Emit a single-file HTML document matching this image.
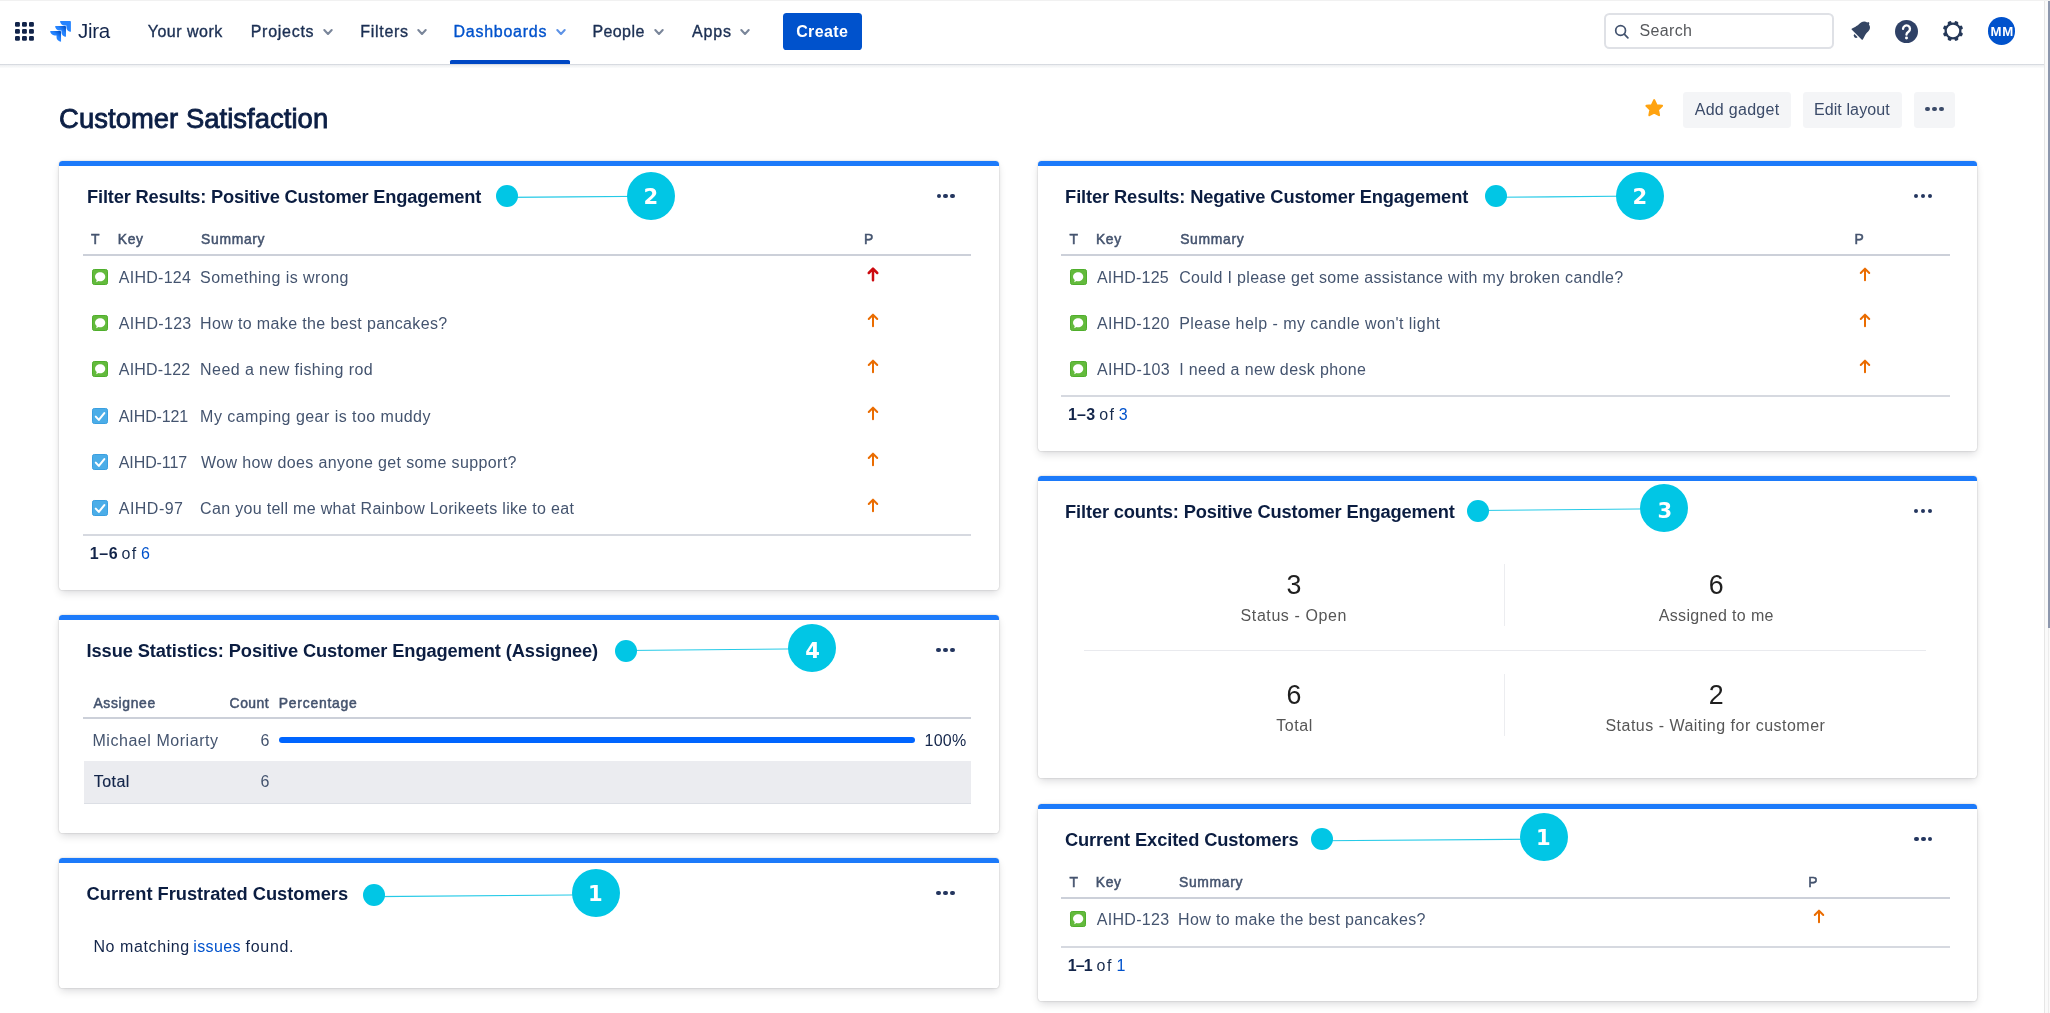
<!DOCTYPE html><html lang="en"><head><meta charset="utf-8"><title>Customer Satisfaction - Jira</title><style>
html,body{margin:0;padding:0}
body{will-change:transform;width:2050px;height:1013px;overflow:hidden;background:#fff;font-family:"Liberation Sans",Arial,sans-serif;position:relative;color:#172b4d}
.t{position:absolute;white-space:pre;line-height:1;margin:0;padding:0;font-weight:400;text-decoration:none}
.a{position:absolute}
svg{position:absolute;overflow:visible}
.nav{position:absolute;left:0;top:0;width:2043.5px;height:64px;background:#fff}
.nav:after{content:"";position:absolute;left:0;right:0;top:100%;height:4.6px;background:linear-gradient(180deg,rgba(9,30,66,.16) 0,rgba(9,30,66,.16) 1px,rgba(9,30,66,.07) 1px,rgba(9,30,66,0) 4.6px)}
.topline{position:absolute;left:0;top:0;width:2050px;height:1px;background:#f1f1f1}
.btn{position:absolute;background:#f4f5f7;border-radius:3.4px}
.create{position:absolute;background:#0052cc;border-radius:3.6px}
.search{position:absolute;box-sizing:border-box;border:2.2px solid #dfe1e6;border-radius:5.5px;background:#fff}
.avatar{position:absolute;border-radius:50%;background:#0052cc}
.gadget{position:absolute;background:#fff;border-radius:3.6px;box-shadow:0 4px 8px -1px rgba(10,10,20,.14),0 0 1.6px rgba(10,10,20,.28),0 0 7px rgba(10,10,20,.04)}
.gadget:before{content:"";position:absolute;left:0;right:0;top:0;height:5px;background:#1c7afa;border-radius:3.6px 3.6px 0 0}
.rule{position:absolute;height:2px;background:#cfd3db}
.dot{position:absolute;border-radius:50%;background:#01c6e5}
.more i{position:absolute;width:4.3px;height:4.3px;border-radius:50%;background:#24365f;top:0}
.more{position:absolute;height:4.3px}
.ico{position:absolute;width:16.3px;height:16px;border-radius:2.3px;box-sizing:border-box}
.ico.g{background:#63ba3c;border:1px solid #4fae2c}
.ico.b{background:#4bade8;border:1px solid #3a9fe0}
.vsep{position:absolute;width:1px;background:#ecedf0}
.hsep{position:absolute;height:1.2px;background:#e9eaee}
.track{position:absolute;left:2043.5px;top:0;width:6.5px;height:1013px;background:#fafafa;border-left:1.4px solid #e6e6e6;box-sizing:border-box}
.thumb{position:absolute;left:2048px;top:0;width:2px;height:627.5px;background:#8d97ad}
.track2{position:absolute;left:2048px;top:0;width:1px;height:1013px;background:#ececec}
</style></head><body>
<header class="nav">
<svg style="left:15.2px;top:21.9px" width="19" height="19" fill="#12244a"><rect x="0.0" y="0.0" width="4.9" height="4.7" rx="1.3"/><rect x="7.0" y="0.0" width="4.9" height="4.7" rx="1.3"/><rect x="14.0" y="0.0" width="4.9" height="4.7" rx="1.3"/><rect x="0.0" y="7.0" width="4.9" height="4.7" rx="1.3"/><rect x="7.0" y="7.0" width="4.9" height="4.7" rx="1.3"/><rect x="14.0" y="7.0" width="4.9" height="4.7" rx="1.3"/><rect x="0.0" y="14.0" width="4.9" height="4.7" rx="1.3"/><rect x="7.0" y="14.0" width="4.9" height="4.7" rx="1.3"/><rect x="14.0" y="14.0" width="4.9" height="4.7" rx="1.3"/></svg>
<svg style="left:50px;top:20.9px" width="21.1" height="20.7" viewBox="0 0 24 24"><defs><linearGradient id="jg1" x1="98%" y1="0%" x2="58%" y2="41%"><stop offset="18%" stop-color="#0052cc"/><stop offset="100%" stop-color="#2684ff"/></linearGradient></defs><path fill="#2684ff" d="M23.013 0H11.455a5.215 5.215 0 0 0 5.215 5.215h2.129v2.057A5.215 5.215 0 0 0 24 12.483V1.005A1.001 1.001 0 0 0 23.013 0z"/><path fill="url(#jg1)" d="M17.294 5.757H5.736a5.215 5.215 0 0 0 5.215 5.214h2.129v2.058a5.218 5.218 0 0 0 5.215 5.214V6.758a1.001 1.001 0 0 0-1.001-1.001z"/><path fill="url(#jg1)" d="M11.571 11.513H0a5.218 5.218 0 0 0 5.232 5.215h2.13v2.057A5.215 5.215 0 0 0 12.575 24V12.518a1.005 1.005 0 0 0-1.004-1.005z"/></svg>
<span class="t logo" style="left:77.90px;top:21.00px;font-size:20.5px;letter-spacing:-0.233px;color:#11244a;">Jira</span>
<nav>
<a class="t" style="left:147.70px;top:24.00px;font-size:16px;letter-spacing:0.513px;color:#1b2f53;-webkit-text-stroke:0.35px currentColor;">Your work</a>
<a class="t" style="left:250.70px;top:24.00px;font-size:16px;letter-spacing:0.729px;color:#1b2f53;-webkit-text-stroke:0.35px currentColor;">Projects</a>
<svg class="chev" style="left:322.35px;top:27.30px" width="12" height="10" viewBox="-6 -5 12 10"><polyline points="-3.7,-1.9 0,1.9 3.7,-1.9" fill="none" stroke="#7a869a" stroke-width="2.1" stroke-linecap="round" stroke-linejoin="round"/></svg>
<a class="t" style="left:360.20px;top:24.00px;font-size:16px;letter-spacing:0.717px;color:#1b2f53;-webkit-text-stroke:0.35px currentColor;">Filters</a>
<svg class="chev" style="left:415.90px;top:27.30px" width="12" height="10" viewBox="-6 -5 12 10"><polyline points="-3.7,-1.9 0,1.9 3.7,-1.9" fill="none" stroke="#7a869a" stroke-width="2.1" stroke-linecap="round" stroke-linejoin="round"/></svg>
<a class="t" style="left:453.50px;top:24.00px;font-size:16px;letter-spacing:0.744px;color:#0052cc;-webkit-text-stroke:0.35px currentColor;">Dashboards</a>
<svg class="chev" style="left:555.00px;top:27.30px" width="12" height="10" viewBox="-6 -5 12 10"><polyline points="-3.7,-1.9 0,1.9 3.7,-1.9" fill="none" stroke="#5e93e6" stroke-width="2.1" stroke-linecap="round" stroke-linejoin="round"/></svg>
<a class="t" style="left:592.40px;top:24.00px;font-size:16px;letter-spacing:0.420px;color:#1b2f53;-webkit-text-stroke:0.35px currentColor;">People</a>
<svg class="chev" style="left:653.45px;top:27.30px" width="12" height="10" viewBox="-6 -5 12 10"><polyline points="-3.7,-1.9 0,1.9 3.7,-1.9" fill="none" stroke="#7a869a" stroke-width="2.1" stroke-linecap="round" stroke-linejoin="round"/></svg>
<a class="t" style="left:692.00px;top:24.00px;font-size:16px;letter-spacing:0.833px;color:#1b2f53;-webkit-text-stroke:0.35px currentColor;">Apps</a>
<svg class="chev" style="left:739.30px;top:27.30px" width="12" height="10" viewBox="-6 -5 12 10"><polyline points="-3.7,-1.9 0,1.9 3.7,-1.9" fill="none" stroke="#7a869a" stroke-width="2.1" stroke-linecap="round" stroke-linejoin="round"/></svg>
<div class="a" style="left:449.6px;top:60px;width:120.4px;height:4px;background:#0048c4;border-radius:1.6px 1.6px 0 0"></div>
</nav>
<div class="create" style="left:783.2px;top:12.8px;width:78.8px;height:37px"></div>
<b class="t" style="left:796.20px;top:24.00px;font-size:16px;letter-spacing:0.360px;font-weight:700;color:#fff;">Create</b>
<div class="search" style="left:1603.8px;top:13.1px;width:230.2px;height:36.1px"></div>
<svg style="left:1613px;top:22.5px" width="18" height="18" viewBox="0 0 18 18"><circle cx="7.6" cy="7.5" r="4.9" fill="none" stroke="#42526e" stroke-width="1.7"/><line x1="11.3" y1="11.2" x2="14.9" y2="14.9" stroke="#42526e" stroke-width="1.7" stroke-linecap="round"/></svg>
<span class="t" style="left:1639.60px;top:23.00px;font-size:16px;letter-spacing:0.340px;color:#56585c;">Search</span>
<svg style="left:1846.6px;top:17.4px" width="27.43" height="27.43" viewBox="0 0 24 24" fill="#344563"><path d="M6.485 17.669a2 2 0 0 0 2.829 0l-2.829-2.83a2 2 0 0 0 0 2.83zm4.897-12.191l-.725.725c-.782.782-2.21 1.813-3.206 2.311l-3.017 1.509c-.495.248-.584.774-.187 1.171l8.556 8.556c.398.396.922.313 1.171-.188l1.51-3.016c.494-.988 1.526-2.42 2.311-3.206l.725-.726a5.048 5.048 0 0 0 .64-6.356 1.01 1.01 0 1 0-1.354-1.494c-.023.025-.046.049-.066.075a5.043 5.043 0 0 0-2.788-.84 5.036 5.036 0 0 0-3.57 1.478z"/></svg>
<svg style="left:1895.1px;top:19.7px" width="23" height="23" viewBox="0 0 20 20"><circle cx="10" cy="10" r="10" fill="#2f4166"/><path d="M7.0 7.7a3.0 3.0 0 1 1 4.7 2.45c-1.05.72-1.7 1.2-1.7 2.45" fill="none" stroke="#fff" stroke-width="2.05" stroke-linecap="round"/><circle cx="10" cy="15.55" r="1.3" fill="#fff"/></svg>
<svg style="left:1940.7px;top:19px" width="24" height="24" viewBox="-12 -12 24 24"><g fill="#253858" transform="rotate(22.5)"><rect x="-1.95" y="-10.25" width="3.9" height="3.6" rx="1.25" transform="rotate(0)"/><rect x="-1.95" y="-10.25" width="3.9" height="3.6" rx="1.25" transform="rotate(45)"/><rect x="-1.95" y="-10.25" width="3.9" height="3.6" rx="1.25" transform="rotate(90)"/><rect x="-1.95" y="-10.25" width="3.9" height="3.6" rx="1.25" transform="rotate(135)"/><rect x="-1.95" y="-10.25" width="3.9" height="3.6" rx="1.25" transform="rotate(180)"/><rect x="-1.95" y="-10.25" width="3.9" height="3.6" rx="1.25" transform="rotate(225)"/><rect x="-1.95" y="-10.25" width="3.9" height="3.6" rx="1.25" transform="rotate(270)"/><rect x="-1.95" y="-10.25" width="3.9" height="3.6" rx="1.25" transform="rotate(315)"/></g><circle r="7.35" fill="none" stroke="#253858" stroke-width="2.3"/></svg>
<div class="avatar" style="left:1987.8px;top:17.3px;width:27.5px;height:27.5px"></div>
<span class="t" style="left:1990.40px;top:25.00px;font-size:13.2px;letter-spacing:0.900px;font-weight:700;color:#fff;">MM</span>
</header>
<div class="pagehead">
<h1 class="t" style="left:59.10px;top:105.00px;font-size:27.4px;letter-spacing:0.055px;color:#0c1f45;-webkit-text-stroke:0.85px currentColor;">Customer Satisfaction</h1>
<svg style="left:1642.9px;top:97.0px" width="22.4" height="22.4" viewBox="0 0 24 24"><path d="M12 3.3l2.55 5.45 5.85.75-4.3 4.1 1.1 5.9L12 16.6l-5.2 2.9 1.1-5.9-4.3-4.1 5.85-.75z" fill="#ffa310" stroke="#ffa310" stroke-width="2.2" stroke-linejoin="round"/></svg>
<div class="btn" style="left:1683.4px;top:91.6px;width:107.2px;height:36.8px"></div>
<a class="t" style="left:1694.70px;top:102.00px;font-size:16px;letter-spacing:0.289px;color:#3b4b69;">Add gadget</a>
<div class="btn" style="left:1802.8px;top:91.6px;width:98.8px;height:36.8px"></div>
<a class="t" style="left:1813.90px;top:102.00px;font-size:16px;letter-spacing:0.110px;color:#3b4b69;">Edit layout</a>
<div class="btn" style="left:1913.9px;top:91.6px;width:41.2px;height:36.8px"></div>
<span class="more" style="left:1925.40px;top:107.05px;width:18.30px"><i style="left:0.00px;background:#3b4b69;"></i><i style="left:7.00px;background:#3b4b69;"></i><i style="left:14.00px;background:#3b4b69;"></i></span>
</div>
<main>
<section class="gadget" style="left:59px;top:160.7px;width:939.8px;height:429.3px"><h3 class="t" style="left:28.10px;top:27.30px;font-size:18.3px;letter-spacing:-0.188px;font-weight:700;color:#0b1d41;">Filter Results: Positive Customer Engagement</h3><svg style="left:0;top:0" width="10" height="10"><line x1="447.90" y1="36.40" x2="592.05" y2="35.30" stroke="#25cae7" stroke-width="1.15"/></svg><span class="dot" style="left:436.90px;top:24.20px;width:22px;height:22px"></span><span class="dot" style="left:568.00px;top:11.05px;width:48.1px;height:48.1px"></span><b class="t" style="left:584.50px;top:25.30px;font-size:21.1px;font-weight:700;color:#fff;font-family:'DejaVu Sans','Liberation Sans',sans-serif;">2</b><span class="more" style="left:877.50px;top:32.95px;width:18.20px"><i style="left:0.00px;"></i><i style="left:6.95px;"></i><i style="left:13.90px;"></i></span><div class="thead"><b class="t" style="left:32.10px;top:72.30px;font-size:13.9px;color:#44536e;-webkit-text-stroke:0.5px currentColor;">T</b><b class="t" style="left:58.80px;top:72.30px;font-size:13.9px;letter-spacing:0.650px;color:#44536e;-webkit-text-stroke:0.5px currentColor;">Key</b><b class="t" style="left:142.10px;top:72.30px;font-size:13.9px;letter-spacing:0.667px;color:#44536e;-webkit-text-stroke:0.5px currentColor;">Summary</b><b class="t" style="left:805.00px;top:72.30px;font-size:13.9px;color:#44536e;-webkit-text-stroke:0.5px currentColor;">P</b></div><div class="rule" style="left:24.00px;top:93.30px;width:888.00px;background:#ccd0d9;"></div><div class="row"><span class="ico g" style="left:32.80px;top:108.30px"><svg style="left:-1px;top:-1px" width="16.3" height="16.3" viewBox="0 0 16 16"><path d="M8 3.2c2.8 0 5 1.95 5 4.45S10.8 12.1 8 12.1c-.55 0-1.1-.08-1.6-.22L4.1 12.9l.55-2.1C3.6 10 3 8.9 3 7.65 3 5.15 5.2 3.2 8 3.2z" fill="#fff"/></svg></span><a class="t" style="left:59.80px;top:109.30px;font-size:16px;letter-spacing:0.257px;color:#44546f;">AIHD-124</a><a class="t" style="left:141.10px;top:109.30px;font-size:16px;letter-spacing:0.465px;color:#44546f;">Something is wrong</a><svg class="prio" style="left:806.30px;top:106.20px" width="16" height="16" viewBox="-8 0 16 16"><path d="M0 1.7V13.3M-4.25 6L0 1.7 4.25 6" fill="none" stroke="#cc0a10" stroke-width="2.5" stroke-linecap="round" stroke-linejoin="round"/></svg></div><div class="row"><span class="ico g" style="left:32.80px;top:154.30px"><svg style="left:-1px;top:-1px" width="16.3" height="16.3" viewBox="0 0 16 16"><path d="M8 3.2c2.8 0 5 1.95 5 4.45S10.8 12.1 8 12.1c-.55 0-1.1-.08-1.6-.22L4.1 12.9l.55-2.1C3.6 10 3 8.9 3 7.65 3 5.15 5.2 3.2 8 3.2z" fill="#fff"/></svg></span><a class="t" style="left:59.80px;top:155.30px;font-size:16px;letter-spacing:0.314px;color:#44546f;">AIHD-123</a><a class="t" style="left:141.10px;top:155.30px;font-size:16px;letter-spacing:0.362px;color:#44546f;">How to make the best pancakes?</a><svg class="prio" style="left:806.30px;top:152.45px" width="16" height="16" viewBox="-8 0 16 16"><path d="M0 1.7V13.3M-4.25 6L0 1.7 4.25 6" fill="none" stroke="#ea6c00" stroke-width="2.0" stroke-linecap="round" stroke-linejoin="round"/></svg></div><div class="row"><span class="ico g" style="left:32.80px;top:200.30px"><svg style="left:-1px;top:-1px" width="16.3" height="16.3" viewBox="0 0 16 16"><path d="M8 3.2c2.8 0 5 1.95 5 4.45S10.8 12.1 8 12.1c-.55 0-1.1-.08-1.6-.22L4.1 12.9l.55-2.1C3.6 10 3 8.9 3 7.65 3 5.15 5.2 3.2 8 3.2z" fill="#fff"/></svg></span><a class="t" style="left:59.80px;top:201.30px;font-size:16px;letter-spacing:0.171px;color:#44546f;">AIHD-122</a><a class="t" style="left:141.10px;top:201.30px;font-size:16px;letter-spacing:0.424px;color:#44546f;">Need a new fishing rod</a><svg class="prio" style="left:806.30px;top:198.70px" width="16" height="16" viewBox="-8 0 16 16"><path d="M0 1.7V13.3M-4.25 6L0 1.7 4.25 6" fill="none" stroke="#ea6c00" stroke-width="2.0" stroke-linecap="round" stroke-linejoin="round"/></svg></div><div class="row"><span class="ico b" style="left:32.80px;top:247.30px"><svg style="left:-1px;top:-1px" width="16.3" height="16.3" viewBox="0 0 16 16"><polyline points="3.7,8.5 6.7,11.7 12.1,5.0" fill="none" stroke="#fff" stroke-width="2" stroke-linecap="round" stroke-linejoin="round"/></svg></span><a class="t" style="left:59.80px;top:248.30px;font-size:16px;letter-spacing:-0.114px;color:#44546f;">AIHD-121</a><a class="t" style="left:141.10px;top:248.30px;font-size:16px;letter-spacing:0.463px;color:#44546f;">My camping gear is too muddy</a><svg class="prio" style="left:806.30px;top:244.95px" width="16" height="16" viewBox="-8 0 16 16"><path d="M0 1.7V13.3M-4.25 6L0 1.7 4.25 6" fill="none" stroke="#ea6c00" stroke-width="2.0" stroke-linecap="round" stroke-linejoin="round"/></svg></div><div class="row"><span class="ico b" style="left:32.80px;top:293.30px"><svg style="left:-1px;top:-1px" width="16.3" height="16.3" viewBox="0 0 16 16"><polyline points="3.7,8.5 6.7,11.7 12.1,5.0" fill="none" stroke="#fff" stroke-width="2" stroke-linecap="round" stroke-linejoin="round"/></svg></span><a class="t" style="left:59.80px;top:294.30px;font-size:16px;letter-spacing:-0.100px;color:#44546f;">AIHD-117</a><a class="t" style="left:142.10px;top:294.30px;font-size:16px;letter-spacing:0.367px;color:#44546f;">Wow how does anyone get some support?</a><svg class="prio" style="left:806.30px;top:291.20px" width="16" height="16" viewBox="-8 0 16 16"><path d="M0 1.7V13.3M-4.25 6L0 1.7 4.25 6" fill="none" stroke="#ea6c00" stroke-width="2.0" stroke-linecap="round" stroke-linejoin="round"/></svg></div><div class="row"><span class="ico b" style="left:32.80px;top:339.30px"><svg style="left:-1px;top:-1px" width="16.3" height="16.3" viewBox="0 0 16 16"><polyline points="3.7,8.5 6.7,11.7 12.1,5.0" fill="none" stroke="#fff" stroke-width="2" stroke-linecap="round" stroke-linejoin="round"/></svg></span><a class="t" style="left:59.80px;top:340.30px;font-size:16px;letter-spacing:0.467px;color:#44546f;">AIHD-97</a><a class="t" style="left:141.10px;top:340.30px;font-size:16px;letter-spacing:0.314px;color:#44546f;">Can you tell me what Rainbow Lorikeets like to eat</a><svg class="prio" style="left:806.30px;top:337.45px" width="16" height="16" viewBox="-8 0 16 16"><path d="M0 1.7V13.3M-4.25 6L0 1.7 4.25 6" fill="none" stroke="#ea6c00" stroke-width="2.0" stroke-linecap="round" stroke-linejoin="round"/></svg></div><div class="rule" style="left:24.00px;top:373.30px;width:888.00px;background:#d6d9e0;"></div><div class="paging"><b class="t" style="left:30.70px;top:385.30px;font-size:16px;letter-spacing:0.600px;font-weight:700;color:#13254a;">1–6</b><span class="t" style="left:62.60px;top:385.30px;font-size:16px;letter-spacing:1.300px;color:#172b4d;">of</span><a class="t" style="left:82.10px;top:385.30px;font-size:16px;color:#0052cc;">6</a></div></section>
<section class="gadget" style="left:59px;top:615px;width:939.8px;height:217.7px"><h3 class="t" style="left:27.60px;top:27.00px;font-size:18.3px;letter-spacing:-0.116px;font-weight:700;color:#0b1d41;">Issue Statistics: Positive Customer Engagement (Assignee)</h3><svg style="left:0;top:0" width="10" height="10"><line x1="566.90" y1="35.50" x2="753.05" y2="33.80" stroke="#25cae7" stroke-width="1.15"/></svg><span class="dot" style="left:555.90px;top:24.85px;width:22px;height:22px"></span><span class="dot" style="left:729.00px;top:8.75px;width:48.1px;height:48.1px"></span><b class="t" style="left:746.15px;top:25.00px;font-size:21.1px;font-weight:700;color:#fff;font-family:'DejaVu Sans','Liberation Sans',sans-serif;">4</b><span class="more" style="left:877.40px;top:33.15px;width:18.20px"><i style="left:0.00px;"></i><i style="left:6.95px;"></i><i style="left:13.90px;"></i></span><b class="t" style="left:34.40px;top:82.00px;font-size:13.9px;letter-spacing:0.671px;color:#44536e;-webkit-text-stroke:0.5px currentColor;">Assignee</b><b class="t" style="left:170.60px;top:82.00px;font-size:13.9px;letter-spacing:0.500px;color:#44536e;-webkit-text-stroke:0.5px currentColor;">Count</b><b class="t" style="left:219.80px;top:82.00px;font-size:13.9px;letter-spacing:0.778px;color:#44536e;-webkit-text-stroke:0.5px currentColor;">Percentage</b><div class="rule" style="left:24.00px;top:102.00px;width:888.00px;background:#ccd0d9;"></div><a class="t" style="left:33.40px;top:118.00px;font-size:16px;letter-spacing:0.553px;color:#44546f;">Michael Moriarty</a><a class="t" style="left:201.50px;top:118.00px;font-size:16px;color:#44546f;">6</a><div class="a" style="left:220.4px;top:121.5px;width:635.6px;height:6.4px;border-radius:3.2px;background:#0065ff"></div><span class="t" style="left:865.60px;top:118.00px;font-size:16px;letter-spacing:0.233px;color:#13254a;">100%</span><div class="a" style="left:24.7px;top:146.0px;width:887.3px;height:42.2px;background:#ebecf0;border-bottom:1.6px solid #dcdfe5"></div><span class="t" style="left:34.80px;top:159.00px;font-size:16px;letter-spacing:0.425px;color:#13254a;-webkit-text-stroke:0.15px currentColor;">Total</span><span class="t" style="left:201.50px;top:159.00px;font-size:16px;color:#44546f;">6</span></section>
<section class="gadget" style="left:59px;top:858px;width:939.8px;height:130.3px"><h3 class="t" style="left:27.60px;top:27.00px;font-size:18.3px;letter-spacing:-0.022px;font-weight:700;color:#0b1d41;">Current Frustrated Customers</h3><svg style="left:0;top:0" width="10" height="10"><line x1="314.80" y1="38.60" x2="537.10" y2="36.80" stroke="#25cae7" stroke-width="1.15"/></svg><span class="dot" style="left:303.80px;top:25.80px;width:22px;height:22px"></span><span class="dot" style="left:513.05px;top:10.65px;width:48.1px;height:48.1px"></span><b class="t" style="left:529.10px;top:25.00px;font-size:21.1px;font-weight:700;color:#fff;font-family:'DejaVu Sans','Liberation Sans',sans-serif;">1</b><span class="more" style="left:877.40px;top:33.15px;width:18.20px"><i style="left:0.00px;"></i><i style="left:6.95px;"></i><i style="left:13.90px;"></i></span><p><span class="t" style="left:34.40px;top:81.00px;font-size:16px;letter-spacing:0.600px;color:#13254a;">No matching</span><a class="t" style="left:134.30px;top:81.00px;font-size:16px;letter-spacing:0.360px;color:#0052cc;">issues</a><span class="t" style="left:186.60px;top:81.00px;font-size:16px;letter-spacing:0.680px;color:#13254a;">found.</span></p></section>
<section class="gadget" style="left:1037.8px;top:160.8px;width:939.6px;height:290.0px"><h3 class="t" style="left:27.30px;top:27.20px;font-size:18.3px;letter-spacing:-0.121px;font-weight:700;color:#0b1d41;">Filter Results: Negative Customer Engagement</h3><svg style="left:0;top:0" width="10" height="10"><line x1="458.10" y1="36.30" x2="602.10" y2="35.00" stroke="#25cae7" stroke-width="1.15"/></svg><span class="dot" style="left:447.10px;top:24.05px;width:22px;height:22px"></span><span class="dot" style="left:578.05px;top:10.95px;width:48.1px;height:48.1px"></span><b class="t" style="left:594.80px;top:25.20px;font-size:21.1px;font-weight:700;color:#fff;font-family:'DejaVu Sans','Liberation Sans',sans-serif;">2</b><span class="more" style="left:876.40px;top:33.05px;width:18.20px"><i style="left:0.00px;"></i><i style="left:6.95px;"></i><i style="left:13.90px;"></i></span><div class="thead"><b class="t" style="left:31.80px;top:72.20px;font-size:13.9px;color:#44536e;-webkit-text-stroke:0.5px currentColor;">T</b><b class="t" style="left:58.10px;top:72.20px;font-size:13.9px;letter-spacing:0.650px;color:#44536e;-webkit-text-stroke:0.5px currentColor;">Key</b><b class="t" style="left:142.40px;top:72.20px;font-size:13.9px;letter-spacing:0.667px;color:#44536e;-webkit-text-stroke:0.5px currentColor;">Summary</b><b class="t" style="left:816.60px;top:72.20px;font-size:13.9px;color:#44536e;-webkit-text-stroke:0.5px currentColor;">P</b></div><div class="rule" style="left:23.20px;top:93.20px;width:889.00px;background:#ccd0d9;"></div><div class="row"><span class="ico g" style="left:32.50px;top:108.20px"><svg style="left:-1px;top:-1px" width="16.3" height="16.3" viewBox="0 0 16 16"><path d="M8 3.2c2.8 0 5 1.95 5 4.45S10.8 12.1 8 12.1c-.55 0-1.1-.08-1.6-.22L4.1 12.9l.55-2.1C3.6 10 3 8.9 3 7.65 3 5.15 5.2 3.2 8 3.2z" fill="#fff"/></svg></span><a class="t" style="left:59.10px;top:109.20px;font-size:16px;letter-spacing:0.229px;color:#44546f;">AIHD-125</a><a class="t" style="left:141.40px;top:109.20px;font-size:16px;letter-spacing:0.337px;color:#44546f;">Could I please get some assistance with my broken candle?</a><svg class="prio" style="left:818.80px;top:106.20px" width="16" height="16" viewBox="-8 0 16 16"><path d="M0 1.7V13.3M-4.25 6L0 1.7 4.25 6" fill="none" stroke="#ea6c00" stroke-width="2.0" stroke-linecap="round" stroke-linejoin="round"/></svg></div><div class="row"><span class="ico g" style="left:32.50px;top:154.20px"><svg style="left:-1px;top:-1px" width="16.3" height="16.3" viewBox="0 0 16 16"><path d="M8 3.2c2.8 0 5 1.95 5 4.45S10.8 12.1 8 12.1c-.55 0-1.1-.08-1.6-.22L4.1 12.9l.55-2.1C3.6 10 3 8.9 3 7.65 3 5.15 5.2 3.2 8 3.2z" fill="#fff"/></svg></span><a class="t" style="left:59.10px;top:155.20px;font-size:16px;letter-spacing:0.314px;color:#44546f;">AIHD-120</a><a class="t" style="left:141.40px;top:155.20px;font-size:16px;letter-spacing:0.438px;color:#44546f;">Please help - my candle won't light</a><svg class="prio" style="left:818.80px;top:152.45px" width="16" height="16" viewBox="-8 0 16 16"><path d="M0 1.7V13.3M-4.25 6L0 1.7 4.25 6" fill="none" stroke="#ea6c00" stroke-width="2.0" stroke-linecap="round" stroke-linejoin="round"/></svg></div><div class="row"><span class="ico g" style="left:32.50px;top:200.20px"><svg style="left:-1px;top:-1px" width="16.3" height="16.3" viewBox="0 0 16 16"><path d="M8 3.2c2.8 0 5 1.95 5 4.45S10.8 12.1 8 12.1c-.55 0-1.1-.08-1.6-.22L4.1 12.9l.55-2.1C3.6 10 3 8.9 3 7.65 3 5.15 5.2 3.2 8 3.2z" fill="#fff"/></svg></span><a class="t" style="left:59.10px;top:201.20px;font-size:16px;letter-spacing:0.343px;color:#44546f;">AIHD-103</a><a class="t" style="left:141.40px;top:201.20px;font-size:16px;letter-spacing:0.355px;color:#44546f;">I need a new desk phone</a><svg class="prio" style="left:818.80px;top:198.70px" width="16" height="16" viewBox="-8 0 16 16"><path d="M0 1.7V13.3M-4.25 6L0 1.7 4.25 6" fill="none" stroke="#ea6c00" stroke-width="2.0" stroke-linecap="round" stroke-linejoin="round"/></svg></div><div class="rule" style="left:23.20px;top:234.20px;width:889.00px;background:#d6d9e0;"></div><div class="paging"><b class="t" style="left:30.20px;top:246.20px;font-size:16px;letter-spacing:0.200px;font-weight:700;color:#13254a;">1–3</b><span class="t" style="left:61.40px;top:246.20px;font-size:16px;letter-spacing:1.300px;color:#172b4d;">of</span><a class="t" style="left:81.00px;top:246.20px;font-size:16px;color:#0052cc;">3</a></div></section>
<section class="gadget" style="left:1037.8px;top:476px;width:939.6px;height:302.1px"><h3 class="t" style="left:27.30px;top:27.00px;font-size:18.3px;letter-spacing:-0.155px;font-weight:700;color:#0b1d41;">Filter counts: Positive Customer Engagement</h3><svg style="left:0;top:0" width="10" height="10"><line x1="440.05" y1="34.50" x2="626.20" y2="32.80" stroke="#25cae7" stroke-width="1.15"/></svg><span class="dot" style="left:429.05px;top:23.85px;width:22px;height:22px"></span><span class="dot" style="left:602.15px;top:7.75px;width:48.1px;height:48.1px"></span><b class="t" style="left:619.80px;top:24.00px;font-size:21.1px;font-weight:700;color:#fff;font-family:'DejaVu Sans','Liberation Sans',sans-serif;">3</b><span class="more" style="left:876.40px;top:32.75px;width:18.20px"><i style="left:0.00px;"></i><i style="left:6.95px;"></i><i style="left:13.90px;"></i></span><span class="t" style="left:248.80px;top:96.00px;font-size:26.8px;color:#1f1f1f;">3</span><span class="t" style="left:202.80px;top:132.00px;font-size:16px;letter-spacing:0.583px;color:#565656;">Status - Open</span><span class="t" style="left:670.90px;top:96.00px;font-size:26.8px;color:#1f1f1f;">6</span><span class="t" style="left:620.90px;top:132.00px;font-size:16px;letter-spacing:0.346px;color:#565656;">Assigned to me</span><span class="t" style="left:248.80px;top:206.00px;font-size:26.8px;color:#1f1f1f;">6</span><span class="t" style="left:238.50px;top:242.00px;font-size:16px;letter-spacing:0.550px;color:#565656;">Total</span><span class="t" style="left:670.90px;top:206.00px;font-size:26.8px;color:#1f1f1f;">2</span><span class="t" style="left:567.60px;top:242.00px;font-size:16px;letter-spacing:0.493px;color:#565656;">Status - Waiting for customer</span><div class="vsep" style="left:466.5px;top:88.2px;height:62.3px"></div><div class="vsep" style="left:466.5px;top:198.3px;height:62px"></div><div class="hsep" style="left:46.6px;top:173.9px;width:842.0px"></div></section>
<section class="gadget" style="left:1037.8px;top:803.9px;width:939.6px;height:197.1px"><h3 class="t" style="left:27.10px;top:27.10px;font-size:18.3px;letter-spacing:-0.121px;font-weight:700;color:#0b1d41;">Current Excited Customers</h3><svg style="left:0;top:0" width="10" height="10"><line x1="284.20" y1="36.70" x2="506.15" y2="35.10" stroke="#25cae7" stroke-width="1.15"/></svg><span class="dot" style="left:273.20px;top:24.00px;width:22px;height:22px"></span><span class="dot" style="left:482.10px;top:8.85px;width:48.1px;height:48.1px"></span><b class="t" style="left:498.20px;top:23.10px;font-size:21.1px;font-weight:700;color:#fff;font-family:'DejaVu Sans','Liberation Sans',sans-serif;">1</b><span class="more" style="left:876.50px;top:32.95px;width:18.20px"><i style="left:0.00px;"></i><i style="left:6.95px;"></i><i style="left:13.90px;"></i></span><div class="thead"><b class="t" style="left:31.70px;top:72.10px;font-size:13.9px;color:#44536e;-webkit-text-stroke:0.5px currentColor;">T</b><b class="t" style="left:58.00px;top:72.10px;font-size:13.9px;letter-spacing:0.650px;color:#44536e;-webkit-text-stroke:0.5px currentColor;">Key</b><b class="t" style="left:141.20px;top:72.10px;font-size:13.9px;letter-spacing:0.667px;color:#44536e;-webkit-text-stroke:0.5px currentColor;">Summary</b><b class="t" style="left:770.50px;top:72.10px;font-size:13.9px;color:#44536e;-webkit-text-stroke:0.5px currentColor;">P</b></div><div class="rule" style="left:23.20px;top:93.10px;width:889.00px;background:#ccd0d9;"></div><div class="row"><span class="ico g" style="left:32.40px;top:107.10px"><svg style="left:-1px;top:-1px" width="16.3" height="16.3" viewBox="0 0 16 16"><path d="M8 3.2c2.8 0 5 1.95 5 4.45S10.8 12.1 8 12.1c-.55 0-1.1-.08-1.6-.22L4.1 12.9l.55-2.1C3.6 10 3 8.9 3 7.65 3 5.15 5.2 3.2 8 3.2z" fill="#fff"/></svg></span><a class="t" style="left:59.00px;top:108.10px;font-size:16px;letter-spacing:0.286px;color:#44546f;">AIHD-123</a><a class="t" style="left:140.20px;top:108.10px;font-size:16px;letter-spacing:0.376px;color:#44546f;">How to make the best pancakes?</a><svg class="prio" style="left:772.80px;top:105.60px" width="16" height="16" viewBox="-8 0 16 16"><path d="M0 1.7V13.3M-4.25 6L0 1.7 4.25 6" fill="none" stroke="#ea6c00" stroke-width="2.0" stroke-linecap="round" stroke-linejoin="round"/></svg></div><div class="rule" style="left:23.20px;top:142.10px;width:889.00px;background:#d6d9e0;"></div><div class="paging"><b class="t" style="left:30.00px;top:154.10px;font-size:16px;letter-spacing:-0.900px;font-weight:700;color:#13254a;">1–1</b><span class="t" style="left:58.80px;top:154.10px;font-size:16px;letter-spacing:1.600px;color:#172b4d;">of</span><a class="t" style="left:78.80px;top:154.10px;font-size:16px;color:#0052cc;">1</a></div></section>
</main>
<div class="track"></div><div class="track2"></div><div class="thumb"></div><div class="topline"></div>
</body></html>
